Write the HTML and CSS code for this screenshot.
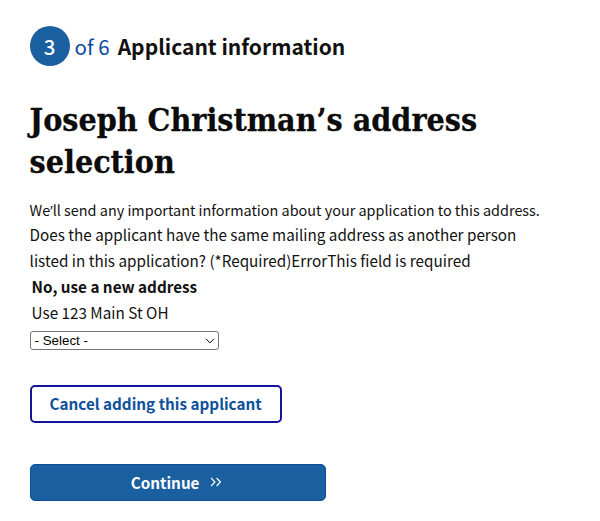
FILE: index.html
```html
<!DOCTYPE html>
<html lang="en">
<head>
<meta charset="utf-8">
<title>Applicant information</title>
<link rel="stylesheet" href="styles.css">
</head>
<body>
<main class="form">
  <header class="step">
    <span class="step-number">3</span>
    <span class="step-total">of 6</span>
    <span class="step-title">Applicant information</span>
  </header>
  <h1>Joseph Christman’s address<br>selection</h1>
  <p class="intro">We<span class="quote">’</span>ll send any important information about your application to this address.</p>
  <p class="question">Does the applicant have the same mailing address as another person<br>listed in this application? (*Required)ErrorThis field is required</p>
  <div class="option option-selected">No, use a new address</div>
  <div class="option">Use 123 Main St OH</div>
  <div class="select" role="combobox" tabindex="0">
    <span>- Select -</span>
    <svg width="10" height="6" viewBox="0 0 10 6"><path d="M1 .8 5 4.9 9 .8"/></svg>
  </div>
  <button class="button cancel" type="button">Cancel adding this applicant</button>
  <button class="button continue" type="button">
    <span>Continue</span>
    <svg width="12" height="10" viewBox="0 0 12 10"><path d="M1.1 1 4.9 5 1.1 9M6.6 1 10.4 5 6.6 9"/></svg>
  </button>
</main>
</body>
</html>
```
FILE: styles.css
```css
* { box-sizing: border-box; }
body {
  margin: 0;
  background: #fff;
  color: #111;
  font-family: "Noto Sans CJK SC", "Noto Sans", sans-serif;
  font-size: 15.25px;
  line-height: 25.5px;
}
.form {
  display: flex;
  flex-direction: column;
  align-items: flex-start;
  padding: 26px 29.6px 0;
}
.step { display: flex; align-items: center; height: 40px; font-size: 20.5px; }
.step-number {
  display: flex;
  align-items: center;
  justify-content: center;
  width: 40px;
  height: 40px;
  padding-top: 2px;
  border-radius: 50%;
  background: #1a5fa0;
  color: #fff;
  font-weight: 500;
}
.step-total { margin-left: 5px; padding-top: 2px; color: #0b4aa0; }
.step-title { margin-left: 8px; padding-top: 2px; font-size: 21px; font-weight: 700; }
h1 {
  margin: 33px 0 0;
  color: #0c0c0c;
  font-family: "DejaVu Serif Condensed", "DejaVu Serif", serif;
  font-stretch: condensed;
  font-size: 31.9px;
  font-weight: 700;
  line-height: 42px;
  white-space: nowrap;
  -webkit-text-stroke: .3px currentColor;
}
p { margin: 0; white-space: nowrap; }
.intro { margin-top: 14px; font-size: 14.42px; line-height: 25px; }
.quote { font-family: "Open Sans", sans-serif; line-height: 1; }
.option { padding-left: 2px; line-height: 26px; }
.option-selected { font-weight: 700; }
.select {
  display: flex;
  align-items: center;
  justify-content: space-between;
  width: 189px;
  height: 19px;
  margin-top: 6.4px;
  padding: 0 3px 0 4px;
  border: 1px solid #767676;
  border-radius: 3px;
  color: #000;
  font: 13.33px/17px "Liberation Sans", Arial, sans-serif;
}
svg { fill: none; stroke: currentColor; stroke-width: 1.2; }
.select svg { stroke-width: 1; }
.button {
  display: flex;
  align-items: center;
  justify-content: center;
  padding: 0;
  border: 2px solid #14149a;
  border-radius: 5px;
  font: 700 15.25px/24px "Noto Sans CJK SC", "Noto Sans", sans-serif;
  white-space: nowrap;
}
.cancel { width: 252px; height: 38px; margin-top: 34.6px; padding-bottom: 1px; background: #fff; color: #0d509b; }
.continue {
  gap: 11px;
  width: 296px;
  height: 37px;
  margin-top: 41px;
  padding: 0 2px 1px 0;
  border: 1px solid #0d4d9c;
  background: #1a5fa0;
  color: #fff;
}
```
